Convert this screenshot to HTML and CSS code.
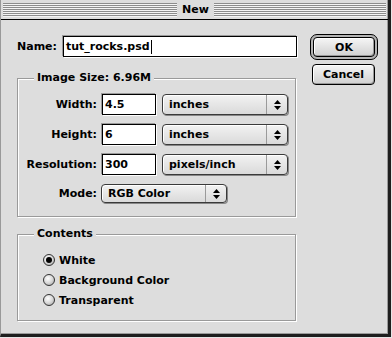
FILE: index.html
```html
<!DOCTYPE html>
<html lang="en">
<head>
  <meta charset="UTF-8" />
  <title>New</title>
  <link rel="stylesheet" href="styles.css">
</head>
<body>
  <div class="window">
    <div class="titlebar">
      <div class="stripes"><span class="title">New</span></div>
    </div>

    <div class="content">
      <div class="main">
        <div class="name-row">
          <span class="label">Name:</span>
          <div class="field name-field">tut_rocks.psd<span class="caret"></span></div>
        </div>

        <fieldset class="group size-group">
          <legend>Image Size: 6.96M</legend>
          <div class="row">
            <span class="row-label">Width:</span>
            <div class="field small">4.5</div>
            <div class="popup wide"><span class="popup-text">inches</span><span class="popup-arrow"><svg width="7" height="10" viewBox="0 0 7 10"><path d="M3.5 0 L7 4 L0 4 Z M0 6 L7 6 L3.5 10 Z" fill="#000"/></svg></span></div>
          </div>
          <div class="row">
            <span class="row-label">Height:</span>
            <div class="field small">6</div>
            <div class="popup wide"><span class="popup-text">inches</span><span class="popup-arrow"><svg width="7" height="10" viewBox="0 0 7 10"><path d="M3.5 0 L7 4 L0 4 Z M0 6 L7 6 L3.5 10 Z" fill="#000"/></svg></span></div>
          </div>
          <div class="row">
            <span class="row-label">Resolution:</span>
            <div class="field small">300</div>
            <div class="popup wide"><span class="popup-text">pixels/inch</span><span class="popup-arrow"><svg width="7" height="10" viewBox="0 0 7 10"><path d="M3.5 0 L7 4 L0 4 Z M0 6 L7 6 L3.5 10 Z" fill="#000"/></svg></span></div>
          </div>
          <div class="row mode-row">
            <span class="row-label">Mode:</span>
            <div class="popup mode"><span class="popup-text">RGB Color</span><span class="popup-arrow"><svg width="7" height="10" viewBox="0 0 7 10"><path d="M3.5 0 L7 4 L0 4 Z M0 6 L7 6 L3.5 10 Z" fill="#000"/></svg></span></div>
          </div>
        </fieldset>

        <fieldset class="group contents-group">
          <legend>Contents</legend>
          <div class="radio-row"><span class="radio checked"></span>White</div>
          <div class="radio-row"><span class="radio"></span>Background Color</div>
          <div class="radio-row"><span class="radio"></span>Transparent</div>
        </fieldset>
      </div>

      <div class="buttons">
        <div class="default-ring"><div class="button ok">OK</div></div>
        <div class="button cancel">Cancel</div>
      </div>
    </div>
  </div>
</body>
</html>
```

FILE: styles.css
```css
html, body {
  margin: 0;
  background: #e6e6e6;
}
body {
  font-family: "DejaVu Sans", sans-serif;
  font-weight: bold;
  font-size: 11px;
  color: #000;
}
.window {
  width: 391px;
  height: 337px;
  box-sizing: border-box;
  background: #dddddd;
  border-left: 1px solid #999;
  border-right: 3px solid #1e1e1e;
  border-bottom: 3px solid #1e1e1e;
  box-shadow: inset -1px -1px 0 #9a9a9a;
}
.titlebar {
  height: 20px;
  border-bottom: 1px solid #000;
  padding: 3px 2px 0 2px;
  box-sizing: border-box;
}
.stripes {
  height: 14px;
  background: repeating-linear-gradient(#8c8c8c 0 1px, #f4f4f4 1px 2px);
  display: flex;
  justify-content: center;
  align-items: center;
}
.title {
  background: #dddddd;
  padding: 0 5px;
  line-height: 16px;
  margin-left: 2px;
}

.content {
  display: flex;
  gap: 14px;
  padding: 14px 0 0 16px;
}
.main {
  width: 279px;
  padding-top: 2px;
}

.name-row {
  display: flex;
  align-items: center;
  gap: 6px;
  margin-right: -1px;
}
.field {
  height: 21px;
  box-sizing: border-box;
  background: #fff;
  border: 1px solid #000;
  box-shadow: -1px -1px 0 #9a9a9a, 1px 1px 0 #fff;
  padding-left: 2px;
  line-height: 19px;
  display: flex;
  align-items: center;
}
.name-field {
  flex: 1;
}
.caret {
  width: 1px;
  height: 14px;
  background: #000;
  margin-left: 1px;
}

.group {
  margin: 14px 0 0 0;
  padding: 0;
  min-width: 0;
  border: 1px solid #9a9a9a;
  box-shadow: 1px 1px 0 #fff, inset 1px 1px 0 #fff;
}
.group legend {
  margin-left: 16px;
  padding: 0 3px;
  line-height: 14px;
  background: #dddddd;
}
.size-group {
  padding: 9px 0 13px 0;
}
.row {
  display: flex;
  align-items: center;
  gap: 5px;
  height: 21px;
  margin-bottom: 9px;
}
.row-label {
  width: 79px;
  text-align: right;
}
.field.small {
  width: 54px;
}
.popup {
  height: 21px;
  box-sizing: border-box;
  border: 1px solid #3a3a3a;
  border-radius: 4px;
  background: linear-gradient(#f2f2f2, #dadada);
  box-shadow: inset 1px 1px 0 #fff, 1px 1px 0 #888;
  display: flex;
  align-items: center;
  margin-left: 1px;
}
.popup.wide {
  width: 126px;
}
.popup-text {
  flex: 1;
  padding-left: 6px;
}
.popup-arrow {
  width: 20px;
  align-self: stretch;
  border-left: 1px solid #9a9a9a;
  display: flex;
  align-items: center;
  justify-content: center;
}
.mode-row {
  height: 19px;
  margin-bottom: 0;
  gap: 3px;
}
.popup.mode {
  width: 126px;
  height: 19px;
}

.group.contents-group {
  margin-top: 10px;
  padding: 9px 0 10px 0;
}
.radio-row {
  display: flex;
  align-items: center;
  gap: 4px;
  height: 20px;
  margin-left: 25px;
}
.radio {
  width: 12px;
  height: 12px;
  box-sizing: border-box;
  border: 1px solid #333;
  border-radius: 50%;
  background: radial-gradient(circle at 40% 35%, #fff 0, #d8d8d8 50%, #9a9a9a 100%);
  display: flex;
  align-items: center;
  justify-content: center;
}
.radio.checked::after {
  content: "";
  width: 6px;
  height: 6px;
  border-radius: 50%;
  background: #000;
}

.buttons {
  display: flex;
  flex-direction: column;
  align-items: flex-start;
}
.default-ring {
  border: 1px solid #000;
  border-radius: 7px;
  padding: 2px;
  background: #b4b4b4;
}
.button {
  box-sizing: border-box;
  border: 1px solid #000;
  border-radius: 4px;
  background: linear-gradient(#f6f6f6, #d0d0d0);
  box-shadow: inset 1px 1px 0 #fff, inset -1px -1px 0 #999;
  display: flex;
  align-items: center;
  justify-content: center;
}
.button.ok {
  width: 62px;
  height: 20px;
}
.button.cancel {
  width: 63px;
  height: 21px;
  margin: 4px 0 0 2px;
}
```
